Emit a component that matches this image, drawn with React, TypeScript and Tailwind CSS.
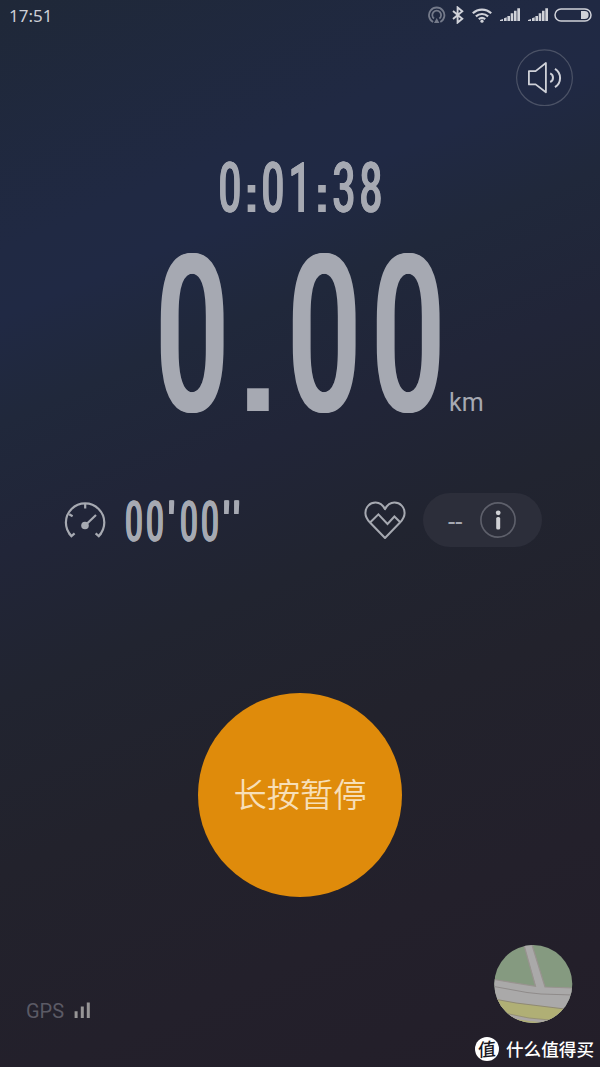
import React from "react";

type Cell = { char: string; cell: string; glyph: string };

const TIME_DIGIT =
  "text-[70px] font-medium scale-x-[0.58] [text-shadow:0.01em_0_currentColor,-0.01em_0_currentColor]";
const TIME_COLON = "font-['Liberation_Sans'] text-[54px] font-bold";

const timeCells: Cell[] = [
  { char: "0", cell: "w-[27px]", glyph: TIME_DIGIT },
  { char: ":", cell: "w-[17px]", glyph: TIME_COLON },
  { char: "0", cell: "w-[26px]", glyph: TIME_DIGIT },
  { char: "1", cell: "w-[27px]", glyph: TIME_DIGIT },
  { char: ":", cell: "w-[18px]", glyph: TIME_COLON },
  { char: "3", cell: "w-[26px]", glyph: TIME_DIGIT },
  { char: "8", cell: "w-[27px]", glyph: TIME_DIGIT },
];

const BIG_ZERO =
  "text-[219px] font-medium scale-x-[0.59] [text-shadow:0.009em_0_currentColor,-0.009em_0_currentColor]";

const distanceCells: Cell[] = [
  { char: "0", cell: "w-[84px]", glyph: BIG_ZERO },
  { char: ".", cell: "w-[48px]", glyph: "font-['Liberation_Sans'] text-[153px] font-bold" },
  { char: "0", cell: "w-[84px]", glyph: BIG_ZERO },
  { char: "0", cell: "w-[84px]", glyph: BIG_ZERO },
];

const PACE_DIGIT =
  "text-[56px] font-medium scale-x-[0.57] [text-shadow:0.01em_0_currentColor,-0.01em_0_currentColor]";
const PACE_MARK =
  "text-[54px] font-medium scale-x-[0.85] [text-shadow:0.012em_0_currentColor,-0.012em_0_currentColor]";

const paceCells: Cell[] = [
  { char: "0", cell: "w-[20px]", glyph: PACE_DIGIT },
  { char: "0", cell: "w-[22px]", glyph: PACE_DIGIT },
  { char: "'", cell: "w-[12px]", glyph: PACE_MARK },
  { char: "0", cell: "w-[21px]", glyph: PACE_DIGIT },
  { char: "0", cell: "w-[22px]", glyph: PACE_DIGIT },
  { char: "'", cell: "w-[11px]", glyph: PACE_MARK },
  { char: "'", cell: "w-[9px]", glyph: PACE_MARK },
];

function Digits({ cells }: { cells: Cell[] }) {
  return (
    <div className="flex items-baseline leading-none text-[#a6a9b2]">
      {cells.map((c, i) => (
        <span key={i} className={`flex shrink-0 justify-center ${c.cell}`}>
          <span className={`block shrink-0 leading-none ${c.glyph}`}>{c.char}</span>
        </span>
      ))}
    </div>
  );
}

function SignalBars() {
  return (
    <svg className="mb-px block" width="20" height="13" viewBox="0 0 20 13" fill="#d0d2d9">
      <path d="M0 13v-1l3-1v2zM4 10.3l2.7-1V13H4zM7.4 8h2.6V13H7.4zM10.7 5.3h2.6V13h-2.6zM14 2.8h2.6v10.2H14zM17.3 0.2H20V13h-2.7z" />
    </svg>
  );
}

function StatusBar() {
  return (
    <header className="flex h-8 items-center pr-[8px] pl-[9px]">
      <span className="-mt-px font-['Noto_Sans'] text-[17px] leading-8 text-[#cdcfd6]">17:51</span>
      <div className="-mt-[2px] ml-auto flex items-center">
        <svg width="18" height="18" viewBox="0 0 18 18" fill="none" stroke="#747a8a" strokeWidth="1.8">
          <path d="M5.1 16A7.7 7.7 0 1 1 12.3 16" />
          <path d="M6.1 12.6A4.4 4.4 0 1 1 11.3 12.6" />
          <path d="M8.7 12l2.7 5H6z" fill="#747a8a" stroke="none" />
        </svg>
        <svg className="ml-[6px]" width="12" height="18" viewBox="0 0 12 18" fill="none" stroke="#d0d2d9" strokeWidth="1.9">
          <path d="M1 5l9.3 7.7L5.6 16.6V1.4l4.7 3.9L1 13" />
        </svg>
        <svg className="ml-[8px]" width="20" height="15" viewBox="0 0 20 15" fill="none" stroke="#d0d2d9" strokeWidth="2.2">
          <path d="M0.8 5.3a13.4 13.4 0 0 1 18.4 0M3.9 8.4a9 9 0 0 1 12.2 0M6.8 11.2a5 5 0 0 1 6.4 0" />
          <circle cx="10" cy="13.2" r="1.6" fill="#d0d2d9" stroke="none" />
        </svg>
        <span className="ml-[8px]"><SignalBars /></span>
        <span className="ml-[8px]"><SignalBars /></span>
        <svg className="ml-[6px]" width="38" height="14" viewBox="0 0 38 14" fill="none">
          <rect x="1" y="1" width="36" height="12" rx="6" stroke="#d0d2d9" strokeWidth="1.5" />
          <path d="M27 3h3.6a4 4 0 0 1 0 8H27z" fill="#d0d2d9" />
        </svg>
      </div>
    </header>
  );
}

function MapThumb() {
  return (
    <svg width="79" height="79" viewBox="0 0 79 79">
      <defs>
        <clipPath id="round"><circle cx="39.3" cy="39" r="39" /></clipPath>
      </defs>
      <g clipPath="url(#round)">
        <rect width="79" height="79" fill="#859a80" />
        <path d="M0 34.5L42 41.5L79 43V79H0z" fill="#aaa9a9" />
        <path d="M30 0L42 42H51L38 0z" fill="#aaa9a9" />
        <path d="M30 0L41.5 41.3L0 34.5M38 0L51 42L79 43" fill="none" stroke="#98938f" strokeWidth="1.2" />
        <path d="M0 41.5L33 47.5L47 49L79 50" fill="none" stroke="#8f8b8a" strokeWidth="1" />
        <path d="M0 54L22 58L79 65V79H0z" fill="#b0af75" />
        <path d="M0 54L22 58L79 65" fill="none" stroke="#8f8973" strokeWidth="1" />
        <path d="M10 68L35 73L66 76V79L35 76L15 73z" fill="#aaa6a4" />
        <path d="M10 68L35 73L66 76" fill="none" stroke="#918b70" strokeWidth="0.8" />
      </g>
    </svg>
  );
}

export default function App() {
  return (
    <main className="flex h-[1067px] w-[600px] flex-col overflow-hidden bg-[linear-gradient(157deg,#1f2838_0%,#202943_19%,#202944_24%,#20283b_32%,#212538_42%,#212430_53%,#22222c_66%,#23202b_82%,#231e29_100%)] font-['Roboto','Noto_Sans_CJK_SC',sans-serif]">
      <StatusBar />

      <div className="mt-[17px] flex h-[58px] justify-end pr-[27px]">
        <button className="flex size-[57px] items-center justify-center" aria-label="volume">
          <svg width="57" height="57" viewBox="0 0 57 57" fill="none" stroke="#cfd1d8" strokeWidth="1.8">
            <circle cx="28.5" cy="28.8" r="27.9" stroke="#4b5266" strokeWidth="1.2" />
            <path d="M12.9 22.1H19.6L29.9 14V43.3L19.6 35.4H12.9z" strokeLinejoin="round" />
            <path d="M34.2 24.4a4.7 4.7 0 0 1 0 8.6M39 19.8a10.8 10.8 0 0 1 0 18.3" strokeWidth="2" />
          </svg>
        </button>
      </div>

      <section className="mt-[43px] flex h-[74px] items-center pt-[2px] pl-[216px]">
        <Digits cells={timeCells} />
      </section>

      <section className="flex h-[223px] items-center pt-px pl-[150px]">
        <Digits cells={distanceCells} />
        <span className="mt-[132px] -ml-px text-[25px] leading-none text-[#a6a9b2]">km</span>
      </section>

      <section className="mt-[46px] flex h-[54px] items-center pl-[64px]">
        <svg width="42" height="38" viewBox="0 0 42 38" fill="none" stroke="#a6a9b1" strokeWidth="2.2">
          <path d="M7.4 35A19.2 19.2 0 1 1 34.8 35M5 32.6L7.4 35.2L10.6 32.4M31.6 32.4L34.8 35.2L37.2 32.6" />
          <path d="M21.2 2V7.4M5.2 13.3L8.6 15.3M21 24.5L32 14" />
          <circle cx="21" cy="24.5" r="3.8" fill="#a6a9b1" stroke="none" />
        </svg>
        <div className="ml-[18px] w-[120px] pt-[4px]">
          <Digits cells={paceCells} />
        </div>
        <svg className="ml-[120px]" width="42" height="38" viewBox="0 0 42 38" fill="none" stroke="#a6a9b1" strokeWidth="2">
          <path d="M21 8.2C18.8 4 15.8 1.6 11.6 1.6C5.7 1.6 1.4 6.2 1.4 11.9C1.4 15.7 3.2 18.5 6 21.5L21 37L36 21.5C38.8 18.5 40.6 15.7 40.6 11.9C40.6 6.2 36.3 1.6 30.4 1.6C26.2 1.6 23.2 4 21 8.2z" strokeLinejoin="round" />
          <path d="M6.3 21.3L14.4 13.4L23.5 23L30.4 15.5L36 21" />
        </svg>
        <div className="ml-[17px] flex h-[54px] w-[119px] items-center rounded-full bg-[#2c2e3a] pr-[26px] pl-[25px]">
          <span className="pt-[3px] text-[26px] leading-none text-[#a6a9b2]">--</span>
          <svg className="ml-auto" width="36" height="36" viewBox="0 0 36 36">
            <circle cx="18" cy="18" r="17.1" fill="none" stroke="#5e606b" strokeWidth="1.6" />
            <circle cx="18.2" cy="10.8" r="2.4" fill="#d0d1d5" />
            <rect x="16.2" y="15" width="4" height="12.5" rx="1.6" fill="#d0d1d5" />
          </svg>
        </div>
      </section>

      <button className="mt-[146px] ml-[198px] flex size-[204px] shrink-0 items-center justify-center rounded-full bg-[#df8b0b] pb-[5px] font-['Noto_Sans_CJK_SC',sans-serif] text-[33.3px] font-[350] text-[#f7dfb8]">
        长按暂停
      </button>

      <div className="mt-[48px] flex h-[78px] pr-[27px] pl-[26px]">
        <div className="flex items-end pb-[2px]">
          <span className="text-[20px] leading-[20px] text-[#5b5a65]">GPS</span>
          <svg className="mb-[3px] ml-[10px]" width="17" height="16" viewBox="0 0 17 16" fill="#979596">
            <path d="M0.6 9.3h3V16h-3zM6.8 4.5h3V16h-3zM12.8 0.5h3V16h-3z" />
          </svg>
        </div>
        <div className="ml-auto"><MapThumb /></div>
      </div>

      <footer className="mt-[13px] flex h-[26px] items-center justify-end pr-[6px] font-['Noto_Sans_CJK_SC',sans-serif]">
        <span className="flex size-[24px] items-center justify-center rounded-full bg-white pb-[2px] text-[18px] leading-none font-medium text-[#17161d]">
          <span className="-skew-x-6 -rotate-6">值</span>
        </span>
        <span className="ml-[7px] text-[17.6px] leading-[26px] font-medium text-white">什么值得买</span>
      </footer>
    </main>
  );
}
